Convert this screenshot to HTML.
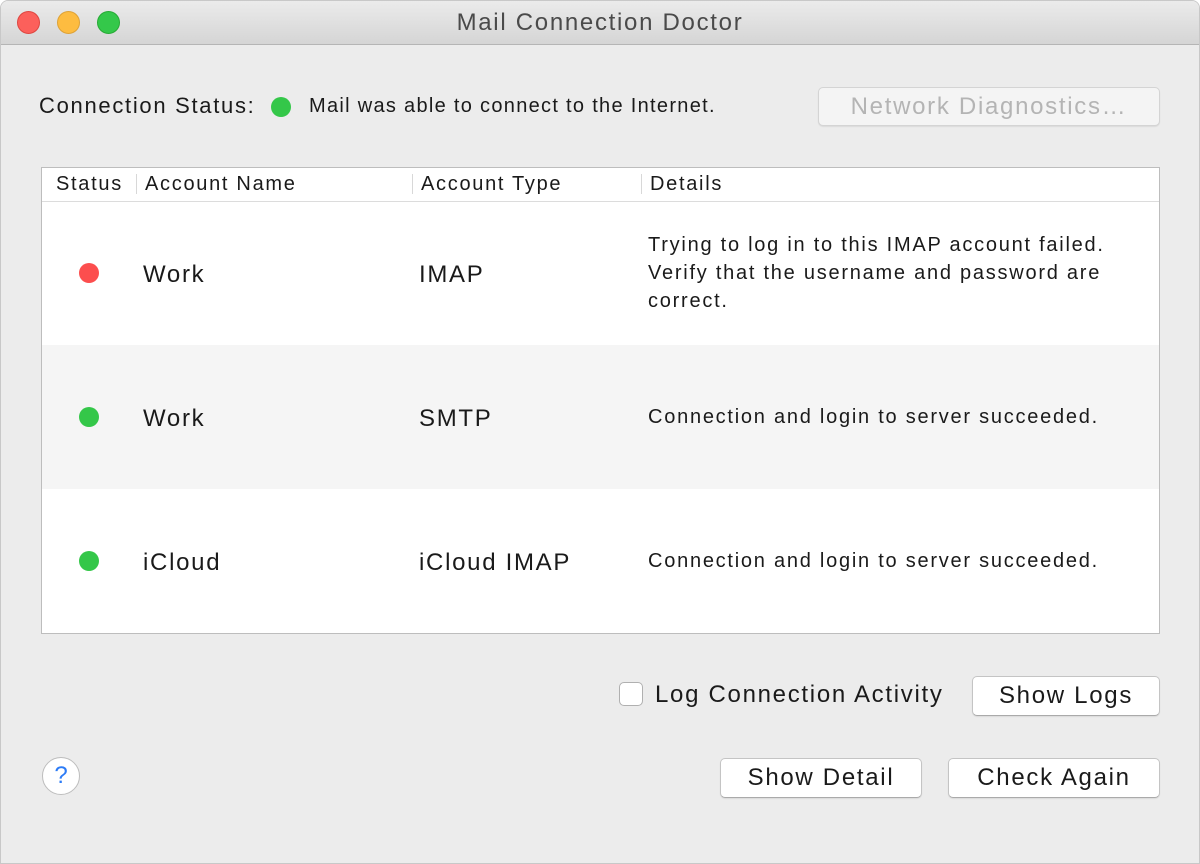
<!DOCTYPE html>
<html><head><style>
body{margin:0;width:1200px;height:864px;background:#fff;font-family:"Liberation Sans",sans-serif;color:#1a1a1a;overflow:hidden;letter-spacing:1.7px}
.win{position:absolute;left:0;top:0;width:1198px;height:862px;border:1px solid #c8c8c8;border-radius:8px 8px 0 0;background:#ececec;overflow:hidden}
.tb{position:absolute;left:0;top:0;width:100%;height:43px;background:linear-gradient(#ebebeb,#d5d5d5);border-bottom:1px solid #b5b5b5;text-align:center;font-size:24px;line-height:44px;color:#4a4a4a}
.l{position:absolute;width:23px;height:23px;border-radius:50%;top:10px}
.a{position:absolute;white-space:nowrap}
.dot{position:absolute;width:20px;height:20px;border-radius:50%}
.g{background:#34c749;border:0}
.btn{position:absolute;background:#fff;border:1px solid #c4c4c4;border-bottom-color:#aaa;border-radius:5px;font-size:24px;text-align:center;box-sizing:border-box;line-height:38px;box-shadow:0 1px 1px rgba(0,0,0,.08)}
.tbl{position:absolute;left:40px;top:166px;width:1119px;height:467px;border:1px solid #bdbdbd;box-sizing:border-box;background:#fff}
.hd{position:absolute;top:0;left:0;right:0;height:33px;border-bottom:1px solid #dcdcdc;font-size:20px;line-height:32px}
.sep{position:absolute;top:6px;width:1px;height:20px;background:#d8d8d8}
.row{position:absolute;left:0;right:0;height:144px}
.big{font-size:24px}
.det{font-size:20px;line-height:28px;letter-spacing:1.75px}
</style></head><body>
<div class="win">
<div class="tb">Mail Connection Doctor
<div class="l" style="left:16px;background:#fc605b;border:1px solid #de4640;box-sizing:border-box"></div>
<div class="l" style="left:56px;background:#fdbc40;border:1px solid #dea236;box-sizing:border-box"></div>
<div class="l" style="left:96px;background:#34c84a;border:1px solid #27aa35;box-sizing:border-box"></div>
</div>
<div class="a" style="left:38px;top:92px;font-size:22px">Connection Status:</div>
<div class="dot g" style="left:270px;top:96px"></div>
<div class="a" style="left:308px;top:94px;font-size:20px;letter-spacing:1.3px">Mail was able to connect to the Internet.</div>
<div class="btn" style="left:817px;top:86px;width:342px;height:39px;color:#b4b4b4;background:#f4f4f4;border-color:#d4d4d4;line-height:37px">Network Diagnostics…</div>
<div class="tbl">
<div class="hd">
<span class="a" style="left:14px">Status</span><div class="sep" style="left:94px"></div>
<span class="a" style="left:103px">Account Name</span><div class="sep" style="left:370px"></div>
<span class="a" style="left:379px">Account Type</span><div class="sep" style="left:599px"></div>
<span class="a" style="left:608px">Details</span>
</div>
<div class="row" style="top:33px">
<div class="dot" style="left:37px;top:62px;background:#fc4e4e"></div>
<div class="a big" style="left:101px;top:60px">Work</div>
<div class="a big" style="left:377px;top:60px">IMAP</div>
<div class="a det" style="left:606px;top:30px">Trying to log in to this IMAP account failed.<br>Verify that the username and password are<br>correct.</div>
</div>
<div class="row" style="top:177px;background:#f5f5f5">
<div class="dot g" style="left:37px;top:62px"></div>
<div class="a big" style="left:101px;top:60px">Work</div>
<div class="a big" style="left:377px;top:60px">SMTP</div>
<div class="a det" style="left:606px;top:58px">Connection and login to server succeeded.</div>
</div>
<div class="row" style="top:321px">
<div class="dot g" style="left:37px;top:62px"></div>
<div class="a big" style="left:101px;top:60px">iCloud</div>
<div class="a big" style="left:377px;top:60px">iCloud IMAP</div>
<div class="a det" style="left:606px;top:58px">Connection and login to server succeeded.</div>
</div>
</div>
<div style="position:absolute;left:618px;top:681px;width:24px;height:24px;border:1px solid #b0b0b0;border-radius:5px;background:#fff;box-sizing:border-box"></div>
<div class="a" style="left:654px;top:680px;font-size:24px">Log Connection Activity</div>
<div class="btn" style="left:971px;top:675px;width:188px;height:40px">Show Logs</div>
<div class="btn" style="left:719px;top:757px;width:202px;height:40px">Show Detail</div>
<div class="btn" style="left:947px;top:757px;width:212px;height:40px">Check Again</div>
<div style="position:absolute;left:41px;top:756px;width:38px;height:38px;border:1px solid #bdbdbd;border-radius:50%;background:#fff;box-sizing:border-box;text-align:center;color:#2c7bf6;font-size:24px;line-height:36px;letter-spacing:0">?</div>
</div>
</body></html>
